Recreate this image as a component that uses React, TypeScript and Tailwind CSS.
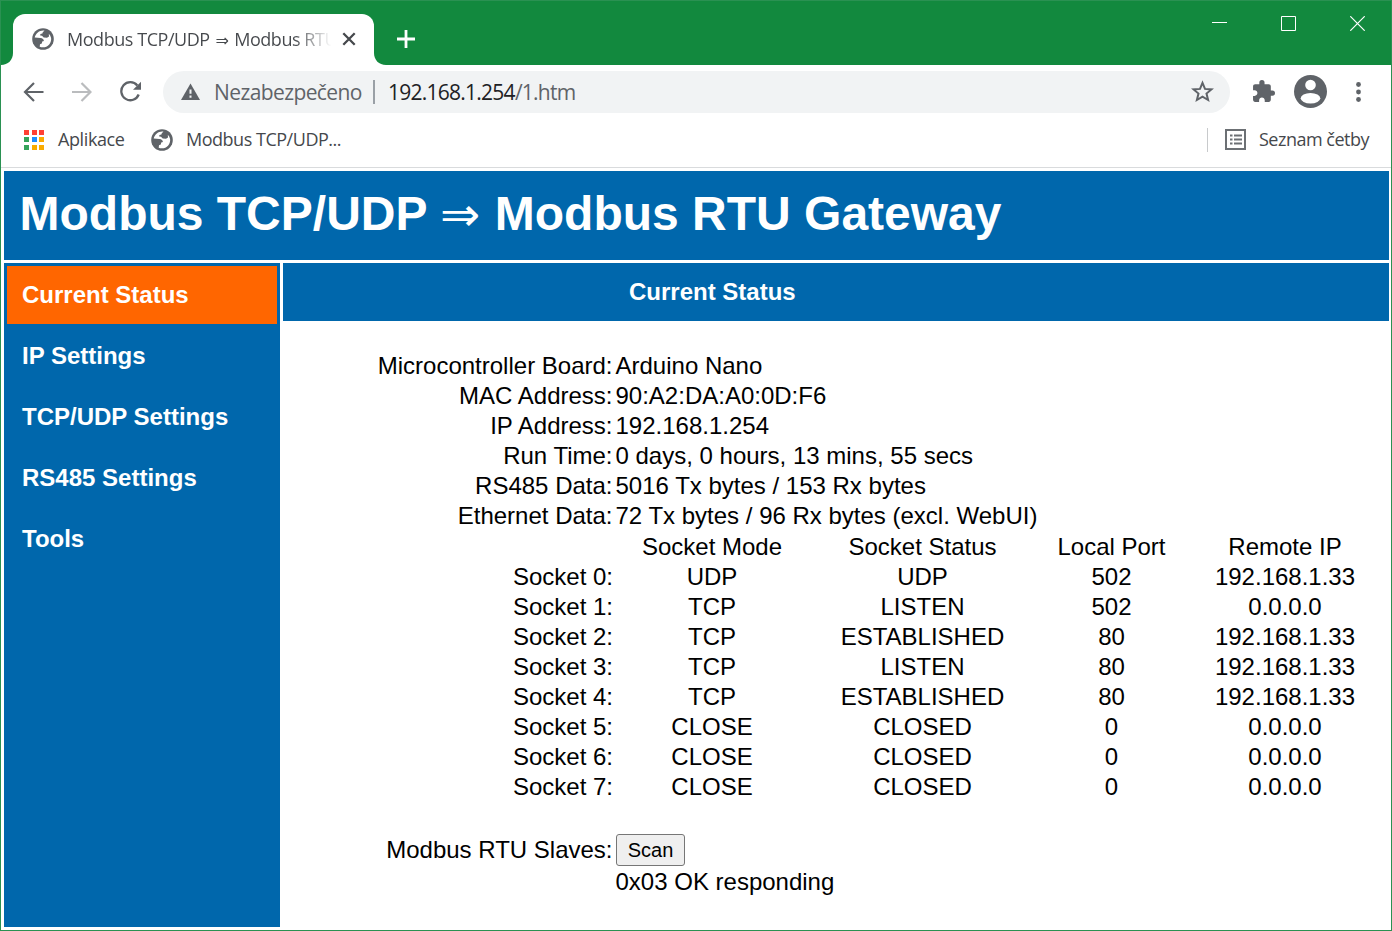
import React from "react";

const NAV = ["Current Status", "IP Settings", "TCP/UDP Settings", "RS485 Settings", "Tools"];

const INFO: [string, string][] = [
  ["Microcontroller Board:", "Arduino Nano"],
  ["MAC Address:", "90:A2:DA:A0:0D:F6"],
  ["IP Address:", "192.168.1.254"],
  ["Run Time:", "0 days, 0 hours, 13 mins, 55 secs"],
  ["RS485 Data:", "5016 Tx bytes / 153 Rx bytes"],
  ["Ethernet Data:", "72 Tx bytes / 96 Rx bytes (excl. WebUI)"],
];

const SOCKETS: string[][] = [
  ["UDP", "UDP", "502", "192.168.1.33"],
  ["TCP", "LISTEN", "502", "0.0.0.0"],
  ["TCP", "ESTABLISHED", "80", "192.168.1.33"],
  ["TCP", "LISTEN", "80", "192.168.1.33"],
  ["TCP", "ESTABLISHED", "80", "192.168.1.33"],
  ["CLOSE", "CLOSED", "0", "0.0.0.0"],
  ["CLOSE", "CLOSED", "0", "0.0.0.0"],
  ["CLOSE", "CLOSED", "0", "0.0.0.0"],
];

const APP_COLORS = ["#ff3f34", "#ff3f34", "#ff3f34", "#34a35a", "#1e8cff", "#f9ab00", "#34a35a", "#f9ab00", "#f9ab00"];

function Globe() {
  return (
    <svg className="size-[22px] shrink-0" viewBox="0 0 22 22">
      <circle cx="11" cy="11" r="10.8" fill="#5f6368" />
      <path d="M12.500 2.700C8 2 3.800 5 2.700 9.600l5.800.4c2 .2 3.300 1.200 3.400 3l-1.700.5-.4 2-1.800.8-.3 2.500c3.300 1.300 7.300.3 9.500-2.400 1.600-1.900 2.200-4.300 1.900-6.400l-.9-2.500-1.400-1.700.2 2.600-2 1.300-3.300-.2-1.700-1.700-1.800-.2.200-1.700 2-.5.500-1.400z" fill="#fff" />
    </svg>
  );
}

function TitleBar() {
  return (
    <div className="flex h-[64px] shrink-0 items-end bg-[#12893e]">
      <svg className="h-3 w-3 shrink-0" viewBox="0 0 12 12"><path d="M12 0v12H0C7 12 12 7 12 0z" fill="#fff" /></svg>
      <div className="flex h-[51px] w-[361px] shrink-0 items-center rounded-t-[12px] bg-white pb-px pl-[19px]">
        <Globe />
        <div className="ml-[13px] w-[267px] whitespace-nowrap bg-gradient-to-r from-[#45484c] from-85% to-transparent to-99% bg-clip-text font-['Open_Sans',sans-serif] text-[18px] tracking-[-0.45px] text-transparent">
          Modbus TCP/UDP <span className="mx-[1.500px] font-['DejaVu_Sans',sans-serif] text-[16px]">⇒</span> Modbus RTU
        </div>
        <svg className="ml-[8px] size-[14px] shrink-0" viewBox="0 0 14 14"><path d="M1.300 1.300l11.400 11.400M12.700 1.300L1.300 12.700" stroke="#45484c" strokeWidth="2.300" /></svg>
      </div>
      <svg className="h-3 w-3 shrink-0" viewBox="0 0 12 12"><path d="M0 0v12h12C5 12 0 7 0 0z" fill="#fff" /></svg>
      <svg className="mb-[17px] ml-[11px] size-[18px]" viewBox="0 0 18 18"><path d="M9 0v18M0 9h18" stroke="#fff" strokeWidth="2.800" /></svg>
      <div className="mb-[34px] ml-auto mr-[26px] flex gap-[54px]">
        <svg className="size-[15px]" viewBox="0 0 15 15"><path d="M0 6.500h15" stroke="#fff" /></svg>
        <svg className="size-[15px]" viewBox="0 0 15 15"><path d="M.5.5h14v14H.5z" stroke="#fff" fill="none" /></svg>
        <svg className="size-[15px]" viewBox="0 0 15 15"><path d="M.3.3l14.400 14.400M14.700.3L.3 14.700" stroke="#fff" strokeWidth="1.200" /></svg>
      </div>
    </div>
  );
}

function Toolbar() {
  return (
    <div className="flex h-[55px] shrink-0 items-center pb-[2px] text-[#5f6368]">
      <svg className="ml-[22px] h-[20px] w-[21px] shrink-0" viewBox="0 0 21 20" fill="none" stroke="currentColor" strokeWidth="2.200"><path d="M20.500 10H2M11 1L2 10l9 9" /></svg>
      <svg className="ml-[27px] h-[20px] w-[21px] shrink-0 text-[#babcbe]" viewBox="0 0 21 20" fill="none" stroke="currentColor" strokeWidth="2.200"><path d="M1 10h18.500M10.500 1l9 9-9 9" /></svg>
      <svg className="ml-[28px] h-[21px] w-[22px] shrink-0" viewBox="0 0 22 21"><path d="M18.700 13.500A9 9 0 1 1 17.300 4.500" fill="none" stroke="currentColor" strokeWidth="2.300" /><path d="M21 .8v8h-8z" fill="currentColor" /></svg>
      <div className="ml-[21px] flex h-[42px] w-[1067px] shrink-0 items-center rounded-full bg-[#f1f3f4] pl-[18px] pr-[16px] font-['Open_Sans',sans-serif] text-[21px]">
        <svg className="h-[18px] w-[19px] shrink-0" viewBox="0 0 19 18"><path d="M9.500.5L19 17H0z" fill="currentColor" /><path d="M9.500 6.500v4.300M9.500 12.500v2.200" stroke="#f1f3f4" strokeWidth="2" /></svg>
        <span className="ml-[14px] w-[149px] whitespace-nowrap pt-[2px] tracking-[-0.6px]">Nezabezpečeno</span>
        <span className="ml-[10px] h-6 w-[2px] bg-[#9aa0a6]" />
        <span className="ml-[13px] whitespace-nowrap pt-[2px] tracking-[-0.75px]"><span className="text-[#202124]">192.168.1.254</span>/1.htm</span>
        <svg className="ml-auto size-[23px]" viewBox="0 0 23 23"><path d="M11.500 2.800l2.500 6.100 6.500.5-5 4.200 1.600 6.400-5.600-3.400L5.900 20l1.600-6.400-5-4.200 6.500-.5z" fill="none" stroke="currentColor" strokeWidth="2" /></svg>
      </div>
      <svg className="ml-[22px] size-[23px] shrink-0" viewBox="1 1 22 22" fill="currentColor"><path d="M20.500 11H19V7c0-1.100-.9-2-2-2h-4V3.500a2.500 2.500 0 0 0-5 0V5H4c-1.100 0-1.990.9-1.990 2v3.800H3.500c1.490 0 2.700 1.210 2.700 2.700s-1.210 2.700-2.700 2.700H2V20c0 1.100.9 2 2 2h3.800v-1.500c0-1.490 1.210-2.700 2.700-2.700s2.700 1.210 2.700 2.700V22H17c1.100 0 2-.9 2-2v-4h1.500a2.500 2.500 0 0 0 0-5z" /></svg>
      <svg className="ml-[19px] size-[33px] shrink-0" viewBox="0 0 33 33"><circle cx="16.500" cy="16.500" r="16.500" fill="currentColor" /><circle cx="16.500" cy="10" r="5.300" fill="#fff" /><ellipse cx="16.500" cy="23.200" rx="9.800" ry="5.300" fill="#fff" /></svg>
      <svg className="ml-[29px] h-[20px] w-[5px] shrink-0" viewBox="0 0 5 20" fill="currentColor"><circle cx="2.500" cy="2.500" r="2.400" /><circle cx="2.500" cy="10" r="2.400" /><circle cx="2.500" cy="17.500" r="2.400" /></svg>
    </div>
  );
}

function Bookmarks() {
  return (
    <div className="flex h-[48px] shrink-0 items-center border-b border-[#d9dbdd] pb-[8px] font-['Open_Sans',sans-serif] text-[18px] text-[#45484c]">
      <div className="ml-[23px] grid grid-cols-3 gap-[2.500px]">
        {APP_COLORS.map((c, i) => <i key={i} className="size-[5px]" style={{ background: c }} />)}
      </div>
      <span className="ml-[14px] w-[93px] tracking-[-0.4px]">Aplikace</span>
      <Globe />
      <span className="ml-[13px] whitespace-nowrap tracking-[-0.48px]">Modbus TCP/UDP...</span>
      <span className="ml-auto h-6 w-px bg-[#c8cacc]" />
      <svg className="ml-[17px] size-[21px]" viewBox="0 0 21 21" fill="none" stroke="#6c7074">
        <path d="M1 1h19v19H1z" strokeWidth="2" />
        <path d="M5 6.500h2.500M5 10.500h2.500M5 14.500h2.500M9 6.500h8M9 10.500h8M9 14.500h8" strokeWidth="2" />
      </svg>
      <span className="ml-[13px] mr-[20px] w-[112px] whitespace-nowrap tracking-[-0.5px]">Seznam četby</span>
    </div>
  );
}

function Status() {
  return (
    <div className="flex flex-col pt-[30px] text-[24px] leading-[30px] text-black">
      {INFO.map(([k, v]) => (
        <div key={k} className="flex h-[30px] gap-[3px]">
          <span className="w-[329.500px] text-right">{k}</span>
          <span className="whitespace-nowrap">{v}</span>
        </div>
      ))}
      <div className="ml-[333px] grid h-[31px] grid-cols-[192px_229px_149px_198px] pt-px text-center">
        <span>Socket Mode</span><span>Socket Status</span><span>Local Port</span><span>Remote IP</span>
      </div>
      {SOCKETS.map((row, i) => (
        <div key={i} className="grid h-[30px] grid-cols-[330px_3px_192px_229px_149px_198px] text-center">
          <span className="text-right">Socket {i}:</span><span />
          {row.map((v, j) => <span key={j}>{v}</span>)}
        </div>
      ))}
      <div className="mt-[32px] flex h-8 items-center gap-[3.500px]">
        <span className="w-[329.500px] text-right">Modbus RTU Slaves:</span>
        <button className="h-8 w-[69px] rounded-[3px] border border-[#767676] bg-[#efefef] text-[20px] leading-[30px]">Scan</button>
      </div>
      <span className="ml-[332.500px] mt-px">0x03 OK responding</span>
    </div>
  );
}

export default function App() {
  return (
    <div className="flex h-[931px] w-[1392px] flex-col overflow-hidden border border-[#2a9152] bg-white">
      <TitleBar />
      <Toolbar />
      <Bookmarks />
      <div className="flex min-h-0 flex-1 flex-col gap-[3px] pb-[3px] pl-[3px] pr-[2px] pt-[3px] font-['Liberation_Sans','DejaVu_Sans',sans-serif] text-white">
        <h1 className="flex h-[89px] shrink-0 items-start whitespace-pre bg-[#0067ac] pl-[15.500px] text-[48px] font-bold leading-[85px]">
          <span>Modbus TCP/UDP </span>
          <span className="w-[41.500px] pt-px font-['DejaVu_Sans',sans-serif] font-normal">⇒</span>
          <span> Modbus RTU Gateway</span>
        </h1>
        <div className="flex min-h-0 flex-1 gap-[3px]">
          <nav className="flex w-[276px] shrink-0 flex-col gap-[3px] bg-[#0067ac] p-[3px] text-[24px] font-bold leading-[58px]">
            {NAV.map((n, i) => (
              <a key={n} className={i === 0 ? "h-[58px] bg-[#ff6600] pl-[15px]" : "h-[58px] pl-[15px]"}>{n}</a>
            ))}
          </nav>
          <main className="min-w-0 flex-1">
            <h2 className="h-[58px] bg-[#0067ac] pl-[346px] text-[24px] font-bold leading-[58px]">Current Status</h2>
            <Status />
          </main>
        </div>
      </div>
    </div>
  );
}
